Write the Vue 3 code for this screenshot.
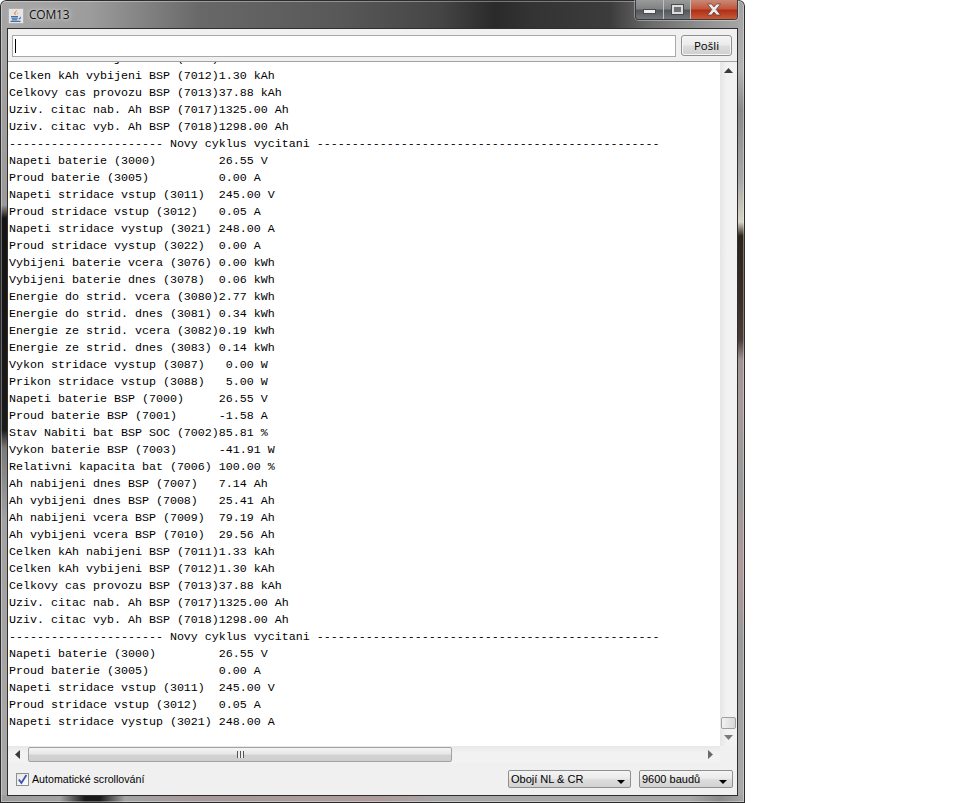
<script setup>
const dash = ' Novy cyklus vycitani '
const header = '-'.repeat(22) + dash + '-'.repeat(49)
const cycle = [
  'Napeti baterie (3000)         26.55 V',
  'Proud baterie (3005)          0.00 A',
  'Napeti stridace vstup (3011)  245.00 V',
  'Proud stridace vstup (3012)   0.05 A',
  'Napeti stridace vystup (3021) 248.00 A',
]
const middle = [
  'Proud stridace vystup (3022)  0.00 A',
  'Vybijeni baterie vcera (3076) 0.00 kWh',
  'Vybijeni baterie dnes (3078)  0.06 kWh',
  'Energie do strid. vcera (3080)2.77 kWh',
  'Energie do strid. dnes (3081) 0.34 kWh',
  'Energie ze strid. vcera (3082)0.19 kWh',
  'Energie ze strid. dnes (3083) 0.14 kWh',
  'Vykon stridace vystup (3087)   0.00 W',
  'Prikon stridace vstup (3088)   5.00 W',
  'Napeti baterie BSP (7000)     26.55 V',
  'Proud baterie BSP (7001)      -1.58 A',
  'Stav Nabiti bat BSP SOC (7002)85.81 %',
  'Vykon baterie BSP (7003)      -41.91 W',
  'Relativni kapacita bat (7006) 100.00 %',
  'Ah nabijeni dnes BSP (7007)   7.14 Ah',
  'Ah vybijeni dnes BSP (7008)   25.41 Ah',
  'Ah nabijeni vcera BSP (7009)  79.19 Ah',
  'Ah vybijeni vcera BSP (7010)  29.56 Ah',
  'Celken kAh nabijeni BSP (7011)1.33 kAh',
  'Celken kAh vybijeni BSP (7012)1.30 kAh',
  'Celkovy cas provozu BSP (7013)37.88 kAh',
  'Uziv. citac nab. Ah BSP (7017)1325.00 Ah',
  'Uziv. citac vyb. Ah BSP (7018)1298.00 Ah',
]
const lines = [
  'Celken kAh nabijeni BSP (7011)1.33 kAh',
  ...middle.slice(-4),
  header,
  ...cycle,
  ...middle,
  header,
  ...cycle,
]
</script>

<template>
  <div class="window">
    <div class="titlebar">
      <svg class="java" width="16" height="16" viewBox="0 0 16 16">
        <rect x="0.5" y="0.5" width="15" height="15" rx="1" fill="#e6e6e6" stroke="#b0b0b0" />
        <path d="M9 1.8c1 1.6-2.6 2.6-1.6 4.2.3.6.6.9.9 1.3-1.8-.8-3-2-1.4-3.4C8 3 9 2.6 9 1.8z" fill="#e2701c" />
        <path d="M10.3 4.2c.3 1-1.5 1.4-.9 2.8-1-.8-.4-2 .9-2.8z" fill="#e8941c" />
        <path d="M3 8.6h7M3.4 10.2h6.4M4 11.8h5.2M12 9c.9.6.2 1.7-1.4 2M2.5 13.4h10" fill="none" stroke="#3c6ea8" stroke-width="1.1" />
      </svg>
      <span class="title">COM13</span>
      <div class="controls">
        <div class="ctl min"><i></i></div>
        <div class="ctl max"><i></i></div>
        <div class="ctl close">
          <svg width="16" height="13" viewBox="0 0 16 13"><path d="M1.5 1h4L8 4l2.5-3h4L10.2 6.5l4.3 5.5h-4L8 9l-2.5 3h-4l4.3-5.5z" fill="#ececec" stroke="#5a3a30" stroke-width="0.7" /></svg>
        </div>
      </div>
    </div>
    <div class="client">
      <div class="sendbar">
        <div class="input"><span class="caret"></span></div>
        <button class="send">Pošli</button>
      </div>
      <div class="middle">
        <div class="pane">
          <div v-for="(l, i) in lines" :key="i" class="line">{{ l }}</div>
        </div>
        <div class="vbar">
          <svg class="arrow" width="9" height="5" viewBox="0 0 9 5"><path d="M4.5 0L9 5H0z" fill="#3a3a3a" /></svg>
          <div class="vthumb"></div>
          <svg class="arrow" width="9" height="5" viewBox="0 0 9 5"><path d="M4.5 5L9 0H0z" fill="#7a7a7a" /></svg>
        </div>
      </div>
      <div class="hrow">
        <div class="hbar">
          <svg width="5" height="9" viewBox="0 0 5 9"><path d="M0 4.5L5 0v9z" fill="#3a3a3a" /></svg>
          <div class="hthumb">
            <span class="grip"></span>
          </div>
          <svg class="hright" width="5" height="9" viewBox="0 0 5 9"><path d="M5 4.5L0 0v9z" fill="#6a6a6a" /></svg>
        </div>
        <div class="corner"></div>
      </div>
      <div class="statusbar">
        <label class="auto">
          <span class="check">
            <svg width="11" height="11" viewBox="0 0 11 11"><path d="M1.8 5.5l2.6 3.4L9.4 1" fill="none" stroke="#3a55b0" stroke-width="1.8" /></svg>
          </span>
          Automatické scrollování
        </label>
        <div class="combo c1">Obojí NL &amp; CR<i></i></div>
        <div class="combo c2">9600 baudů<i></i></div>
      </div>
    </div>
  </div>
</template>

<style>
html, body { margin: 0; background: #fff; }
</style>

<style scoped>
.window {
  width: 745px;
  height: 803px;
  box-sizing: border-box;
  display: flex;
  flex-direction: column;
  padding: 0 7px 7px;
  border-radius: 6px 6px 0 0;
  box-shadow: inset 0 0 0 1px #2c2c2c, inset 0 0 0 2px rgba(255, 255, 255, 0.35);
  overflow: hidden;
  background:
    linear-gradient(90deg, #9c9c9c 0, #a2a2a2 60px, #1a1a1a 85px, #1a1a1a 100px, #a4a4a4 125px, #a89a9a 200px, #ae9c9c 380px, #a8a8a8 450px, #a8a8a8 690px, #8a8a8a 720px, #a8a8a8 745px) bottom / 100% 8px no-repeat,
    linear-gradient(180deg, #a6a6a6 0, #9a9a9a 205px, #141414 218px, #1a1a1a 430px, #7a7a7a 448px, #a2a2a2 520px, #a8a8a8 100%) left / 7px 100% no-repeat,
    linear-gradient(180deg, #a0a0a0 0, #b4b4b4 70px, #8a8a8a 110px, #a8a8a8 180px, #d8d4c4 222px, #2a241c 236px, #3a2e28 300px, #4a3c38 340px, #a09494 360px, #a89a9a 400px, #9a9a9a 480px, #b09a9a 570px, #9a9a9a 640px, #aaa 100%) right / 7px 100% no-repeat,
    linear-gradient(90deg, #a8a8a8 0, #9c9c9c 90px, #686868 200px, #585858 340px, #454545 440px, #2a2a2a 495px, #333 530px, #3c3c3c 610px, #6a6a6a 650px, #8e8e8e 700px, #a8a8a8 745px) top / 100% 28px no-repeat;
}
.titlebar {
  height: 28px;
  flex: none;
  display: flex;
  align-items: flex-start;
}
.java {
  margin: 8px 0 0 1px;
  flex: none;
}
.title {
  margin: 7px 0 0 5px;
  font: 12px/16px "Open Sans", "Liberation Sans", sans-serif;
  letter-spacing: -0.2px;
  color: #111;
  text-shadow: 0 0 6px rgba(235, 235, 235, 0.9), 0 0 3px rgba(235, 235, 235, 0.8);
}
.controls {
  margin-left: auto;
  display: flex;
  height: 20px;
  width: 103px;
  box-sizing: border-box;
  border: 1px solid #3a3a3a;
  border-top: none;
  border-radius: 0 0 4px 4px;
  overflow: hidden;
  box-shadow: 0 0 0 1px rgba(255, 255, 255, 0.35);
}
.ctl {
  display: flex;
  align-items: center;
  justify-content: center;
  height: 100%;
  box-sizing: border-box;
}
.min, .max {
  background: linear-gradient(180deg, #9a9a9a 0, #808284 45%, #54585c 55%, #74787c 100%);
  border-right: 1px solid #c0c0c0;
}
.min { width: 28px; }
.max { width: 27px; }
.min i {
  width: 11px;
  height: 3px;
  margin-top: 4px;
  background: #f0f0f0;
  box-shadow: 0 0 0 1px #4a4a4a;
}
.max i {
  border: 2px solid #dcdcdc;
  background: #6e7276;
  box-sizing: border-box;
  box-shadow: 0 0 0 1px #4a4a4a;
  width: 11px;
  height: 9px;
}
.close {
  flex: 1;
  background: linear-gradient(180deg, #c88a78 0, #c4583c 45%, #b03018 55%, #c85a38 100%);
}
.client {
  flex: 1;
  min-height: 0;
  display: flex;
  flex-direction: column;
  border: 1px solid #2e2e2e;
  background: #f0f0f0;
}
.sendbar {
  height: 33px;
  flex: none;
  box-sizing: border-box;
  display: flex;
  align-items: flex-start;
  gap: 5px;
  padding: 6px 5px 0 4px;
  border-bottom: 1px solid #a2a2a2;
}
.input {
  flex: 1;
  height: 22px;
  box-sizing: border-box;
  border: 1px solid #a9a9a9;
  background: #fff;
  padding: 3px 0 0 2px;
}
.caret {
  display: block;
  width: 1px;
  height: 14px;
  background: #000;
}
.send {
  width: 51px;
  height: 21px;
  padding: 0;
  border: 1px solid #8e8f8f;
  border-radius: 3px;
  background: linear-gradient(180deg, #f4f4f4 0, #ebebeb 45%, #dcdcdc 55%, #cfcfcf 100%);
  box-shadow: inset 0 0 0 1px #f6f6f6;
  font: 11.5px "Open Sans", "Liberation Sans", sans-serif;
  color: #000;
}
.middle {
  flex: 1;
  min-height: 0;
  display: flex;
}
.pane {
  flex: 1;
  min-width: 0;
  background: #fff;
  overflow: hidden;
  display: flex;
  flex-direction: column;
  justify-content: flex-end;
  padding: 0 0 15px 1px;
}
.line {
  flex: none;
  height: 17px;
  font: 11.67px/17px "Liberation Mono", "Courier New", monospace;
  color: #000;
  white-space: pre;
}
.vbar {
  width: 17px;
  flex: none;
  display: flex;
  flex-direction: column;
  align-items: center;
  padding: 6px 0 6px;
  box-sizing: border-box;
  background: linear-gradient(90deg, #e6e6e6, #f2f2f2 40%, #f2f2f2);
}
.vbar .arrow { flex: none; }
.vthumb {
  margin: auto 0 6px;
  width: 15px;
  height: 12px;
  box-sizing: border-box;
  border: 1px solid #a0a0a0;
  border-radius: 2px;
  background: linear-gradient(90deg, #f2f2f2, #d8d8d8);
}
.hrow {
  height: 17px;
  flex: none;
  display: flex;
}
.hbar {
  flex: 1;
  display: flex;
  align-items: center;
  padding-left: 7px;
  background: linear-gradient(180deg, #e8e8e8, #f2f2f2 40%);
}
.hthumb {
  margin-left: 8px;
  width: 424px;
  height: 15px;
  box-sizing: border-box;
  border: 1px solid #a2a2a2;
  border-radius: 2px;
  background: linear-gradient(180deg, #f4f4f4 0, #e8e8e8 45%, #d2d2d2 55%, #cfcfcf 100%);
  display: flex;
  align-items: center;
  justify-content: center;
}
.grip {
  width: 7px;
  height: 7px;
  background: repeating-linear-gradient(90deg, #555 0 1px, #eee 1px 3px);
}
.hright { margin-left: auto; margin-right: 7px; }
.corner {
  width: 17px;
  background: #f0f0f0;
}
.statusbar {
  flex: none;
  height: 32px;
  display: flex;
  align-items: flex-start;
  padding: 7px 4px 0 8px;
  box-sizing: border-box;
  font: 11px/18px "Liberation Sans", sans-serif;
  color: #000;
}
.auto {
  display: flex;
  align-items: center;
  gap: 3px;
  margin-right: auto;
  font-size: 10.65px;
}
.check {
  width: 13px;
  height: 13px;
  box-sizing: border-box;
  border: 1px solid #8e8f8f;
  background: linear-gradient(135deg, #e4e4e4, #fff);
  display: flex;
  align-items: center;
  justify-content: center;
}
.combo {
  height: 18px;
  box-sizing: border-box;
  border: 1px solid #8e8f8f;
  border-radius: 2px;
  background: linear-gradient(180deg, #f4f4f4 0, #ebebeb 45%, #dcdcdc 55%, #d2d2d2 100%);
  padding-left: 2px;
  line-height: 15px;
  display: flex;
  align-items: center;
  justify-content: space-between;
}
.combo i {
  width: 0;
  height: 0;
  margin: 5px 5px 0 0;
  border: 4px solid transparent;
  border-top-color: #000;
  border-bottom: none;
}
.c1 { width: 123px; margin-right: 8px; }
.c2 { width: 94px; }
</style>
